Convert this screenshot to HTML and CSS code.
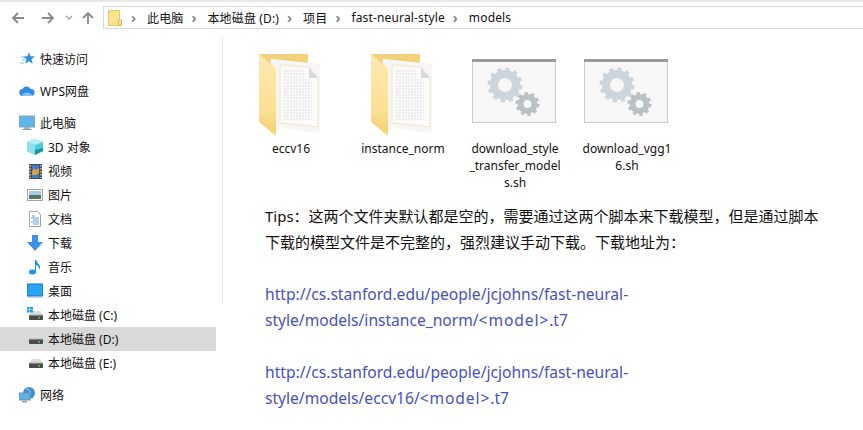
FILE: index.html
```html
<!DOCTYPE html>
<html lang="zh-CN">
<head>
    <meta charset="UTF-8">
    <title>models</title>
    <link rel="stylesheet" href="styles.css">
</head>
<body>

<svg class="defs" width="0" height="0">
    <defs>
        <linearGradient id="flap" x1="0" y1="0" x2="0" y2="1">
            <stop offset="0" stop-color="#fde9b0"/>
            <stop offset="0.7" stop-color="#fcdf92"/>
            <stop offset="1" stop-color="#f4cf72"/>
        </linearGradient>
    </defs>
    <symbol id="drive" viewBox="0 0 16 16">
        <path d="M3 7 4.500 4h9L15 7z" fill="#dcdcdc"/>
        <rect x="2" y="7" width="14" height="6" rx="1" fill="#4a4a4a"/>
        <rect x="2" y="7" width="14" height="1.500" fill="#c4c4c4"/>
        <rect x="11" y="10" width="2" height="1.500" fill="#39d353"/>
    </symbol>
    <symbol id="folder" viewBox="0 0 66 84">
        <path d="M0 0h49v60H0z" fill="#f3d27e"/>
        <path d="M12 5 61 10v68l-4 1-45-7z" fill="#f6f6f6"/>
        <path d="M21 11 50 13l9 11v49L21 69z" fill="#fbfbfb" stroke="#f3e6c2"/>
        <path d="M50 13v11h9z" fill="#d9d9d9"/>
        <path class="lines" d="M25 17h20M25 20h21M25 23h22M25 26h26M25 29h28M25 32h28M25 35h28M25 38h28M25 41h28M25 44h28M25 47h28M25 50h28M25 53h28M25 56h28M25 59h28M25 62h28M25 65h28"/>
        <path d="M0 0 17 14v68L0 68z" fill="url(#flap)"/>
    </symbol>
    <symbol id="script" viewBox="0 0 84 64">
        <rect x=".5" y=".5" width="83" height="63" fill="#f7f7f7" stroke="#c8c8c8"/>
        <rect width="84" height="3" fill="#9a9a9a"/>
        <circle cx="33" cy="26" r="11" fill="none" stroke="#ced5da" stroke-width="8"/>
        <circle cx="33" cy="26" r="15.500" fill="none" stroke="#ced5da" stroke-width="4" stroke-dasharray="4.100 4"/>
        <circle cx="55.500" cy="45" r="7" fill="none" stroke="#b9c1c5" stroke-width="6"/>
        <circle cx="55.500" cy="45" r="10.500" fill="none" stroke="#b9c1c5" stroke-width="3" stroke-dasharray="3.300 3.300"/>
    </symbol>
</svg>

<div class="toolbar">
    <svg class="nav-icon" width="16" height="16" viewBox="0 0 16 16"><path d="M14 8H3M8 3 3 8l5 5" class="nav-stroke"/></svg>
    <svg class="nav-icon forward" width="16" height="16" viewBox="0 0 16 16"><path d="M2 8h11M8 3l5 5-5 5" class="nav-stroke"/></svg>
    <svg class="nav-icon chevron" width="8" height="16" viewBox="0 0 8 16"><path d="m1 6 3 3 3-3" class="nav-thin"/></svg>
    <svg class="nav-icon up" width="16" height="16" viewBox="0 0 16 16"><path d="M8 14V3M3 8l5-5 5 5" class="nav-stroke"/></svg>
    <div class="address">
        <svg class="address-folder" width="14" height="16" viewBox="0 0 14 16"><path d="M.5.5h11v15H.5z" fill="#fde38f" stroke="#e6c770"/><path d="M10.500 10h3v5.500h-3z" fill="#fde38f" stroke="#d9b85c"/></svg>
        <span class="sep">›</span><span class="crumb">此电脑</span>
        <span class="sep">›</span><span class="crumb">本地磁盘 (D:)</span>
        <span class="sep">›</span><span class="crumb">项目</span>
        <span class="sep">›</span><span class="crumb">fast-neural-style</span>
        <span class="sep">›</span><span class="crumb">models</span>
    </div>
</div>

<div class="window">
    <div class="sidebar">
        <div class="nav-row top">
            <svg width="16" height="16" viewBox="0 0 16 16"><path d="M10 1l1.500 4.300 4.500.2-3.500 2.800 1.200 4.400-3.700-2.500-3.700 2.500 1.200-4.400L4 5.500l4.500-.2z" fill="#2f8fe0"/><path d="M2 6h3M3 9h3M1 12h4" stroke="#8cc4f0"/></svg>
            <span>快速访问</span>
        </div>
        <div class="nav-row top spaced">
            <svg width="16" height="16" viewBox="0 0 16 16"><path d="M4 13a3.500 3.500 0 0 1-.5-7A4.500 4.500 0 0 1 11.500 6 3.500 3.500 0 0 1 12.500 13z" fill="#2f8be6"/><path d="M3 12c3-3 6-3 9-1l2 2H4z" fill="#7fc0f5"/></svg>
            <span>WPS网盘</span>
        </div>
        <div class="nav-row top spaced">
            <svg width="16" height="16" viewBox="0 0 16 16"><rect y="1" width="16" height="11" fill="#5fb4ea" stroke="#8ba3b5"/><rect x="5" y="12" width="6" height="2" fill="#a8b4bd"/><rect x="3" y="14" width="10" height="1" fill="#8ba3b5"/></svg>
            <span>此电脑</span>
        </div>
        <div class="nav-row">
            <svg width="16" height="16" viewBox="0 0 16 16"><path d="M8 0 16 3v9l-8 4-8-4V3z" fill="#4fcbdc"/><path d="M0 3l8 3 8-3-8-3z" fill="#b4edf3"/><path d="M0 3l8 3v10l-8-4z" fill="#8be0ea"/><path d="M8 11l8-2v3l-8 4z" fill="#1d93a8"/></svg>
            <span>3D 对象</span>
        </div>
        <div class="nav-row">
            <svg width="16" height="16" viewBox="0 0 16 16"><rect x="2" y="1" width="13" height="15" fill="#4f4f4f"/><path d="M3 2v13M14 2v13" stroke="#e8e8e8" stroke-width="1.200" stroke-dasharray="1.500 1.500"/><rect x="5" y="2" width="7" height="13" fill="#3f78d0"/><path d="M5 9l2-4 2 2 3-2v5l-3 2H5z" fill="#d9a63a"/></svg>
            <span>视频</span>
        </div>
        <div class="nav-row">
            <svg width="16" height="16" viewBox="0 0 16 16"><rect x=".5" y="2.500" width="15" height="11" fill="#fff" stroke="#a3a3a3"/><rect x="2" y="4" width="12" height="4" fill="#a9cbe6"/><rect x="2" y="8" width="12" height="4" fill="#4f7a62"/></svg>
            <span>图片</span>
        </div>
        <div class="nav-row">
            <svg width="16" height="16" viewBox="0 0 16 16"><path d="M2.500.5h8l3 3v12h-11z" fill="#fff" stroke="#a3a3a3"/><path d="M5 5h3M4 7h8M6 9h6M4 11h8M6 13h6" stroke="#5aa7e0"/></svg>
            <span>文档</span>
        </div>
        <div class="nav-row">
            <svg width="16" height="16" viewBox="0 0 16 16"><path d="M5 0h6v7h5l-8 9-8-9h5z" fill="#3b92e4"/></svg>
            <span>下载</span>
        </div>
        <div class="nav-row">
            <svg width="16" height="16" viewBox="0 0 16 16"><ellipse cx="5.500" cy="13" rx="3.500" ry="2.500" fill="#1696ea"/><path d="M8 1h1.500c0 3 3.500 4 3.500 7 0 1-.5 2-1 3 0-3-1-4.500-3-5v7H8z" fill="#1696ea"/></svg>
            <span>音乐</span>
        </div>
        <div class="nav-row">
            <svg width="16" height="16" viewBox="0 0 16 16"><rect y="1" width="16" height="12" fill="#2aa2f5" stroke="#1675c4"/><path d="M1 14h14" stroke="#7cb4de"/></svg>
            <span>桌面</span>
        </div>
        <div class="nav-row">
            <svg width="16" height="16" viewBox="0 0 16 16"><use href="#drive"/><path d="M0 0h2.500v2.500H0zM3 0h3v2.500H3zM0 3h2.500v2.500H0zM3 3h3v2.500H3z" fill="#1aa3ee"/></svg>
            <span>本地磁盘 (C:)</span>
        </div>
        <div class="nav-row selected">
            <svg width="16" height="16" viewBox="0 0 16 16"><use href="#drive"/></svg>
            <span>本地磁盘 (D:)</span>
        </div>
        <div class="nav-row">
            <svg width="16" height="16" viewBox="0 0 16 16"><use href="#drive"/></svg>
            <span>本地磁盘 (E:)</span>
        </div>
        <div class="nav-row top spaced">
            <svg width="16" height="16" viewBox="0 0 16 16"><circle cx="10" cy="6" r="6" fill="#3f8fd0"/><path d="M7 2c3 0 5 2 4 6" stroke="#a9d8f5" fill="none"/><rect y="6" width="11" height="7" fill="#5fb4ea" stroke="#6d8ea8"/><rect x="3" y="14" width="5" height="1.500" fill="#8ba3b5"/></svg>
            <span>网络</span>
        </div>
    </div>

    <div class="content">
        <div class="files">
            <div class="file folder-file">
                <svg class="thumb" width="66" height="84"><use href="#folder"/></svg>
                <div class="file-name">eccv16</div>
            </div>
            <div class="file folder-file">
                <svg class="thumb" width="66" height="84"><use href="#folder"/></svg>
                <div class="file-name">instance_norm</div>
            </div>
            <div class="file script-file">
                <svg class="thumb" width="84" height="64"><use href="#script"/></svg>
                <div class="file-name">download_style<br>_transfer_model<br>s.sh</div>
            </div>
            <div class="file script-file">
                <svg class="thumb" width="84" height="64"><use href="#script"/></svg>
                <div class="file-name">download_vgg1<br>6.sh</div>
            </div>
        </div>
        <div class="article">
            <p>Tips：这两个文件夹默认都是空的，需要通过这两个脚本来下载模型，但是通过脚本<br>下载的模型文件是不完整的，强烈建议手动下载。下载地址为：</p>
            <p><a href="#">http://cs.stanford.edu/people/jcjohns/fast-neural-<br>style/models/instance_norm/<span class="placeholder">&lt;model&gt;</span>.t7</a></p>
            <p><a href="#">http://cs.stanford.edu/people/jcjohns/fast-neural-<br>style/models/eccv16/<span class="placeholder">&lt;model&gt;</span>.t7</a></p>
        </div>
    </div>
</div>

</body>
</html>
```
FILE: styles.css
```css
* {
    box-sizing: border-box;
}
html, body {
    margin: 0;
    height: 100%;
    overflow: hidden;
}
body {
    width: 863px;
    height: 430px;
    background-color: #fff;
    color: #111;
    font-family: "Noto Sans", "Noto Sans CJK SC", sans-serif;
    font-size: 12px;
    border-top: 2px solid #e6e6e6;
}
.defs {
    position: absolute;
}
.toolbar {
    display: flex;
    align-items: center;
    height: 27px;
    margin-top: 2px;
    padding-left: 10px;
}
.nav-icon {
    flex: none;
    margin-top: 1px;
}
.forward {
    margin-left: 14px;
}
.chevron {
    margin-left: 9px;
}
.up {
    margin-left: 7px;
}
.nav-stroke {
    fill: none;
    stroke: #8a8a8a;
    stroke-width: 1.800;
}
.nav-thin {
    fill: none;
    stroke: #a0a0a0;
    stroke-width: 1.300;
}
.address {
    display: flex;
    align-items: center;
    flex: 1;
    height: 23px;
    margin-left: 7px;
    padding-left: 4px;
    border: 1px solid #d9d9d9;
    border-right: none;
}
.crumb {
    letter-spacing: .15px;
}
.sep {
    width: 8px;
    margin-left: 8px;
    margin-right: 8px;
    color: #8a8a8a;
    font-size: 14px;
    font-weight: bold;
    line-height: 14px;
}
.address-folder + .sep {
    margin-left: 9px;
}
.window {
    display: flex;
    height: 400px;
}
.sidebar {
    flex: none;
    width: 223px;
    height: 400px;
    padding-top: 16px;
    background-image: linear-gradient(#eaeaea, #eaeaea);
    background-position: 222px 5px;
    background-size: 1px 268px;
    background-repeat: no-repeat;
}
.nav-row {
    display: flex;
    align-items: center;
    width: 216px;
    height: 24px;
    padding-left: 27px;
    gap: 5px;
}
.nav-row.top {
    padding-left: 19px;
}
.nav-row.spaced {
    margin-top: 8px;
}
.nav-row svg {
    flex: none;
}
.nav-row.selected {
    background-color: #d9d9d9;
}
.content {
    flex: 1;
    padding-left: 12px;
    padding-top: 23px;
}
.files {
    display: flex;
    height: 149px;
}
.file {
    display: flex;
    flex-direction: column;
    align-items: center;
    width: 112px;
}
.thumb {
    flex: none;
    display: block;
    margin-bottom: 2px;
}
.folder-file .thumb {
    margin-left: 2px;
}
.script-file .thumb {
    margin-top: 5px;
    margin-right: 2px;
    margin-bottom: 17px;
}
.file-name {
    text-align: center;
    line-height: 17px;
    white-space: nowrap;
}
.article {
    padding-left: 30px;
    color: #111;
    font-size: 15px;
    line-height: 26px;
}
.article p {
    margin: 0 0 26px;
}
.article a {
    color: #4650c8;
    font-size: 15.600px;
    text-decoration: none;
}
.placeholder {
    letter-spacing: .9px;
}
.lines {
    stroke: #dcdcdc;
    stroke-width: 1.200;
    stroke-dasharray: 2 1;
}
```
